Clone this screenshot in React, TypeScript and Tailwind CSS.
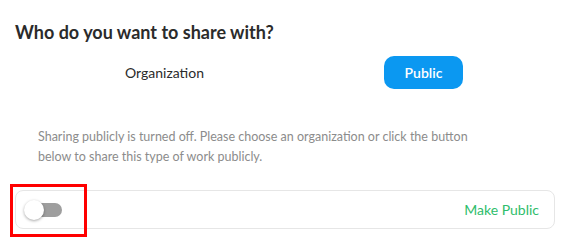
export default function App() {
  return (
    <div className="w-[572px] h-[246px] bg-white font-['Lato','Liberation_Sans',sans-serif] pt-[20px]">
      <h2 className="ml-[15px] text-[18px] leading-[24px] font-bold text-[#2b2b2b]">Who do you want to share with?</h2>
      <div className="flex items-center mt-[12px] h-[33px]">
        <span className="ml-[125px] w-[80px] text-[14px] text-[#2b2b2b]">Organization</span>
        <button className="ml-[179px] w-[79px] h-[33px] rounded-[10px] bg-[#0b98f1] text-white text-[14px] font-semibold">
          Public
        </button>
      </div>
      <p className="ml-[38px] mt-[38px] w-[430px] text-[12.5px] leading-[20px] text-[#8c8c8c]">
        Sharing publicly is turned off. Please choose an organization or click the button below to share this type of work publicly.
      </p>
      <div className="relative ml-[15px] mt-[23px] w-[540px] h-[39px] rounded-[8px] border border-[#e6e6e6] flex items-center justify-between pl-[8px] pr-[15px]">
        <div className="relative w-[38px] h-[20px] flex items-center">
          <div className="absolute left-[2px] w-[36px] h-[14px] rounded-full bg-[#9e9e9e]" />
          <div className="absolute left-0 w-[20px] h-[20px] rounded-full bg-white shadow-[0_1px_3px_rgba(0,0,0,0.35)]" />
        </div>
        <span className="text-[14px] text-[#2ebd6b]">Make Public</span>
        <div className="absolute left-[-6px] top-[-7px] w-[77px] h-[53px] border-[3px] border-[#ff0000]" />
      </div>
    </div>
  );
}
